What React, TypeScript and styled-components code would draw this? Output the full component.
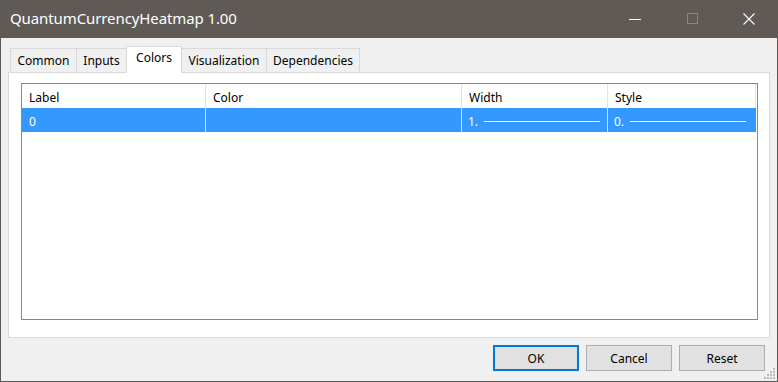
import styled, { createGlobalStyle } from 'styled-components';

const GlobalStyle = createGlobalStyle`
  html, body {
    margin: 0;
    padding: 0;
    background: #f0f0f0;
  }
  body {
    font-family: "Noto Sans", "Open Sans", sans-serif;
    font-size: 12px;
    color: #000;
  }
`;

const tabs = [
  { name: 'Common', width: 67 },
  { name: 'Inputs', width: 51 },
  { name: 'Colors', width: 56 },
  { name: 'Visualization', width: 86 },
  { name: 'Dependencies', width: 94 },
];

const columns = [
  { name: 'Label', width: 184 },
  { name: 'Color', width: 256 },
  { name: 'Width', width: 146 },
  { name: 'Style', width: 148 },
];

export default function App() {
  return (
    <>
      <GlobalStyle />
      <Window>
        <TitleBar>
          <Title>QuantumCurrencyHeatmap 1.00</Title>
          <Controls>
            <ControlButton>
              <svg width="12" height="12" viewBox="0 0 12 12">
                <line x1="0" y1="6.5" x2="12" y2="6.5" stroke="#fff" strokeWidth="1" />
              </svg>
            </ControlButton>
            <ControlButton>
              <svg width="12" height="12" viewBox="0 0 12 12">
                <rect x="0.5" y="0.5" width="10" height="10" fill="none" stroke="#8a8580" strokeWidth="1" />
              </svg>
            </ControlButton>
            <ControlButton>
              <svg width="12" height="12" viewBox="0 0 12 12">
                <path d="M0.5 0.5 L11.5 11.5 M11.5 0.5 L0.5 11.5" stroke="#fff" strokeWidth="1.1" />
              </svg>
            </ControlButton>
          </Controls>
        </TitleBar>
        <Body>
          <TabRow>
            {tabs.map((t) => (
              <Tab key={t.name} $active={t.name === 'Colors'} $width={t.width}>
                {t.name}
              </Tab>
            ))}
          </TabRow>
          <Panel>
            <ListBox>
              <Row>
                {columns.map((c) => (
                  <HeaderCell key={c.name} $width={c.width}>
                    {c.name}
                  </HeaderCell>
                ))}
              </Row>
              <Row $selected>
                <Cell $selected $width={columns[0].width}>0</Cell>
                <Cell $selected $width={columns[1].width} />
                <Cell $selected $width={columns[2].width}>
                  1.
                  <LineSample />
                </Cell>
                <Cell $selected $width={columns[3].width}>
                  0.
                  <LineSample />
                </Cell>
              </Row>
            </ListBox>
          </Panel>
          <Footer>
            <Button $primary>OK</Button>
            <Button>Cancel</Button>
            <Button>Reset</Button>
          </Footer>
        </Body>
        <Grip>
          <svg width="12" height="12" viewBox="0 0 12 12">
            {[
              [9, 0], [9, 3], [6, 3], [9, 6], [6, 6], [3, 6], [9, 9], [6, 9], [3, 9], [0, 9],
            ].map(([x, y], i) => (
              <rect key={i} x={x} y={y} width="2" height="2" fill="#bcbcbc" />
            ))}
          </svg>
        </Grip>
      </Window>
    </>
  );
}

const Window = styled.div`
  position: relative;
  width: 778px;
  height: 382px;
  box-sizing: border-box;
  border: 1px solid #5f5a55;
  border-top: none;
  display: flex;
  flex-direction: column;
  background: #f0f0f0;
  overflow: hidden;
`;

const TitleBar = styled.div`
  height: 38px;
  flex: none;
  background: #5f5a55;
  display: flex;
  align-items: center;
  justify-content: space-between;
  margin: 0 -1px;
`;

const Title = styled.div`
  color: #fff;
  font-size: 15px;
  padding-left: 10px;
  padding-bottom: 2px;
  letter-spacing: -0.1px;
`;

const Controls = styled.div`
  display: flex;
  align-self: stretch;
`;

const ControlButton = styled.div`
  width: 58px;
  display: flex;
  align-items: center;
  justify-content: center;
  padding-bottom: 1px;
  &:last-child {
    width: 54px;
    padding-right: 2px;
  }
`;

const Body = styled.div`
  flex: 1;
  display: flex;
  flex-direction: column;
  padding: 8px 7px 9px 7px;
`;

const TabRow = styled.div`
  display: flex;
  align-items: flex-end;
  height: 26px;
  padding-left: 2px;
  position: relative;
  z-index: 1;
`;

const Tab = styled.div<{ $active?: boolean; $width: number }>`
  box-sizing: border-box;
  width: ${(p) => p.$width}px;
  height: ${(p) => (p.$active ? '27px' : '24px')};
  margin-bottom: ${(p) => (p.$active ? '-1px' : '0')};
  padding-top: ${(p) => (p.$active ? '2px' : '3px')};
  text-align: center;
  border: 1px solid #d9d9d9;
  border-bottom: none;
  margin-right: -1px;
  background: ${(p) => (p.$active ? '#fff' : '#f0f0f0')};
  white-space: nowrap;
`;

const Panel = styled.div`
  height: 266px;
  box-sizing: border-box;
  border: 1px solid #d9d9d9;
  background: #fff;
  padding: 10px 11px 17px 12px;
  display: flex;
`;

const ListBox = styled.div`
  flex: 1;
  border: 1px solid #828790;
  background: #fff;
`;

const Row = styled.div<{ $selected?: boolean }>`
  display: flex;
  height: 24px;
  background: ${(p) => (p.$selected ? '#3399ff' : '#fff')};
  width: 734px;
`;

const HeaderCell = styled.div<{ $width: number }>`
  box-sizing: border-box;
  width: ${(p) => p.$width}px;
  padding: 5px 0 0 7px;
  border-right: 1px solid #e5e5e5;
  flex: none;
`;

const Cell = styled.div<{ $selected?: boolean; $width: number }>`
  box-sizing: border-box;
  width: ${(p) => p.$width}px;
  padding: 5px 0 0 6px;
  border-right: 1px solid ${(p) => (p.$selected ? '#cfe2f6' : '#e5e5e5')};
  color: ${(p) => (p.$selected ? '#fff' : '#000')};
  flex: none;
  display: flex;
  align-items: flex-start;
  &:first-child {
    padding-left: 7px;
  }
  &:last-child {
    border-right: none;
  }
`;

const LineSample = styled.div`
  flex: none;
  width: 116px;
  height: 1px;
  background: #fff;
  margin: 8px 0 0 6px;
`;

const Footer = styled.div`
  display: flex;
  justify-content: flex-end;
  gap: 7px;
  padding: 7px 5px 0 0;
`;

const Button = styled.div<{ $primary?: boolean }>`
  box-sizing: border-box;
  width: 86px;
  height: 26px;
  display: flex;
  align-items: center;
  justify-content: center;
  background: #e1e1e1;
  border: ${(p) => (p.$primary ? '2px solid #0078d7' : '1px solid #adadad')};
`;

const Grip = styled.div`
  position: absolute;
  right: 1px;
  bottom: 1px;
  width: 12px;
  height: 12px;
  line-height: 0;
`;
